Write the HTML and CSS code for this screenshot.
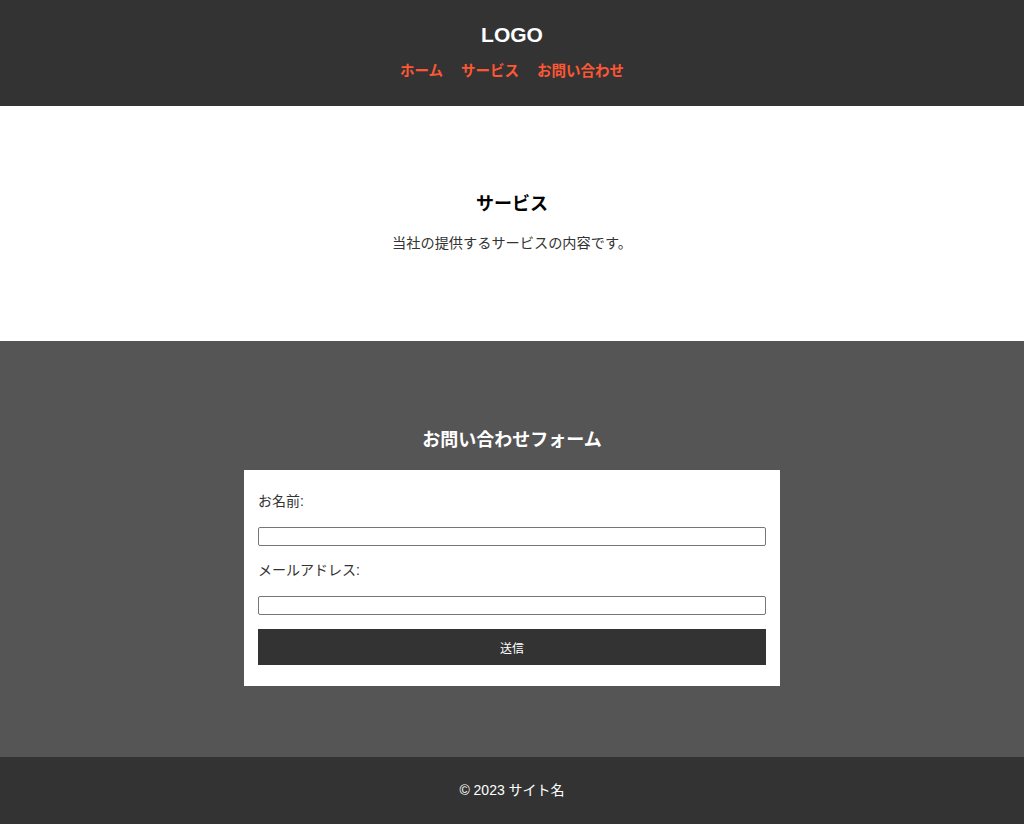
FILE: index.html
```html
<!DOCTYPE html>
<html lang="ja">
<head>
    <meta charset="UTF-8">
    <meta name="viewport" content="width=device-width, initial-scale=1.0">
    <title>サイト名</title>
    <link rel="stylesheet" href="styles.css">
</head>
<body>
    <header class="site-header">
        <div class="logo">LOGO</div>
        <nav class="nav">
            <a href="#">ホーム</a>
            <a href="#services">サービス</a>
            <a href="#contact">お問い合わせ</a>
        </nav>
    </header>

    <section class="services" id="services">
        <h2>サービス</h2>
        <p>当社の提供するサービスの内容です。</p>
    </section>

    <section class="contact" id="contact">
        <h2>お問い合わせフォーム</h2>
        <form class="contact-form">
            <label for="name">お名前:</label>
            <input type="text" id="name">
            <label for="email">メールアドレス:</label>
            <input type="email" id="email">
            <button type="button">送信</button>
        </form>
    </section>

    <footer class="site-footer">
        <p>&copy; 2023 サイト名</p>
    </footer>
</body>
</html>
```

FILE: styles.css
```css
body{
    margin: 0;
    font-family: "Liberation Sans", "Noto Sans CJK JP", sans-serif;
    font-size: 14px;
    color: #333;
}
.site-header{
    background-color: #333;
    text-align: center;
    padding: 23px 0 25px;
}
.logo{
    color: white;
    font-size: 21px;
    font-weight: bold;
    line-height: 24px;
    margin-bottom: 14px;
}
.nav{
    display: flex;
    justify-content: center;
    gap: 18px;
    line-height: 20px;
}
.nav a{
    color: #ff5733;
    font-weight: bold;
    font-size: 14.5px;
    text-decoration: none;
}
.services{
    background-color: white;
    text-align: center;
    padding: 87px 0 88px;
}
.services h2{
    font-size: 18px;
    line-height: 22px;
    color: #000;
    margin: 0 0 18px;
}
.services p{
    margin: 0;
    line-height: 20px;
    font-size: 14.2px;
}
.contact{
    background-color: #555;
    padding: 88px 0 71px;
}
.contact h2{
    color: white;
    text-align: center;
    font-size: 18px;
    line-height: 22px;
    margin: 0 0 19px;
}
.contact-form{
    background-color: white;
    width: 536px;
    box-sizing: border-box;
    margin: 0 auto;
    padding: 21px 14px 21px;
    display: flex;
    flex-direction: column;
}
.contact-form label{
    line-height: 20px;
    margin-bottom: 16px;
}
.contact-form input{
    height: 19px;
    box-sizing: border-box;
    border: 1px solid #767676;
    border-radius: 2px;
    margin: 0 0 14px;
    padding: 0 2px;
}
.contact-form button{
    height: 36px;
    background-color: #333;
    color: white;
    border: none;
    font-family: inherit;
    font-size: 12px;
    cursor: pointer;
}
.site-footer{
    background-color: #333;
    color: white;
    text-align: center;
    padding: 23px 0 24px;
}
.site-footer p{
    margin: 0;
    line-height: 20px;
}
```
